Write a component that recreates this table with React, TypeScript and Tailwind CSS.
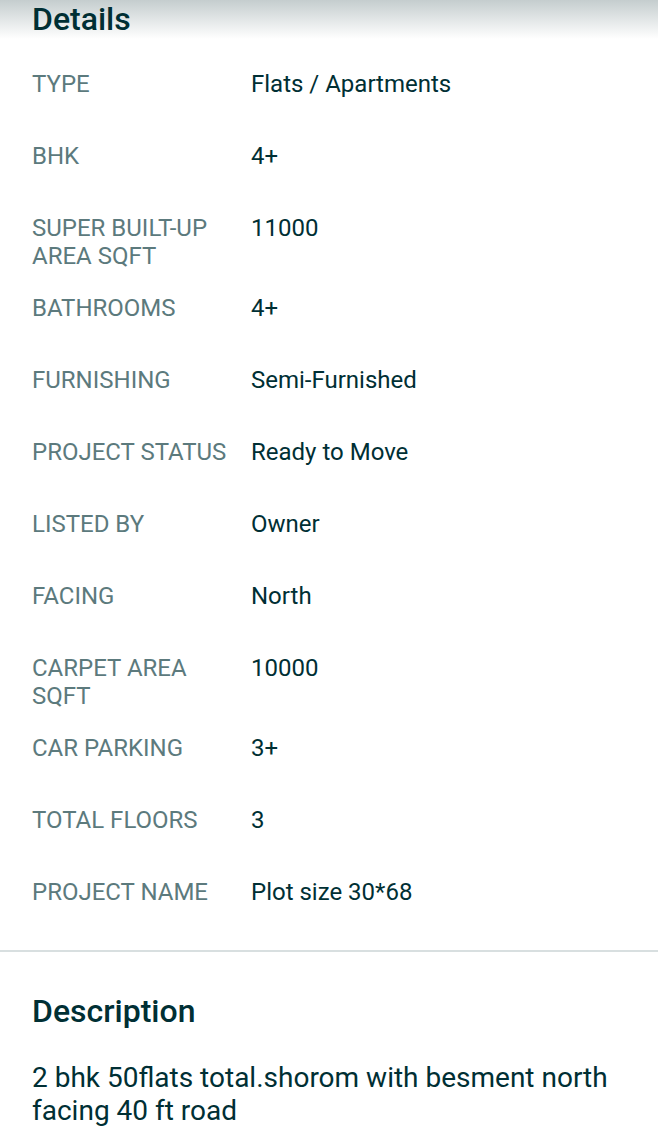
const details: [string, string][] = [
  ['TYPE', 'Flats / Apartments'],
  ['BHK', '4+'],
  ['SUPER BUILT-UP AREA SQFT', '11000'],
  ['BATHROOMS', '4+'],
  ['FURNISHING', 'Semi-Furnished'],
  ['PROJECT STATUS', 'Ready to Move'],
  ['LISTED BY', 'Owner'],
  ['FACING', 'North'],
  ['CARPET AREA SQFT', '10000'],
  ['CAR PARKING', '3+'],
  ['TOTAL FLOORS', '3'],
  ['PROJECT NAME', 'Plot size 30*68'],
];

export default function App() {
  return (
    <main className="relative min-h-[1142px] w-full bg-white font-['Roboto',sans-serif] text-[#002f34]">
      <div className="pointer-events-none absolute inset-x-0 top-0 h-[40px] bg-gradient-to-b from-[#c3cccd] to-white/0" />
      <section className="relative px-[32px]">
        <h2 className="-mt-[1px] text-[32px] leading-[40px] font-medium">Details</h2>
        <div className="mt-[31px]">
          {details.map(([label, value]) => (
            <div key={label} className="flex min-h-[72px] items-start pb-[24px] text-[24px] leading-[28px]">
              <div className="w-[219px] shrink-0 pr-2 text-[#5c7a7d]">{label}</div>
              <div>{value}</div>
            </div>
          ))}
        </div>
      </section>
      <div className="h-[2px] bg-[#d8dfe0]" />
      <section className="px-[32px] pt-[39px]">
        <h2 className="text-[32px] leading-[40px] font-medium">Description</h2>
        <p className="mt-[30px] text-[28px] leading-[33px]">
          2 bhk 50flats total.shorom with besment north facing 40 ft road
        </p>
      </section>
    </main>
  );
}
